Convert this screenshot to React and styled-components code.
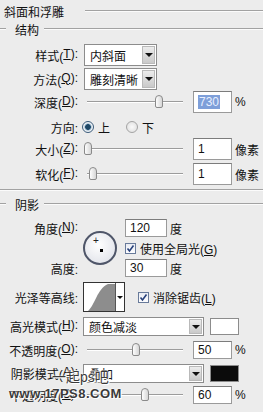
import styled, { createGlobalStyle } from "styled-components";

const Global = createGlobalStyle`
  html, body { margin: 0; padding: 0; background: #ececec; }
  body {
    font-family: "Liberation Sans", "Noto Sans CJK SC", sans-serif;
    font-size: 12px;
    color: #111;
  }
`;

const Panel = styled.div`
  position: relative;
  width: 263px;
  height: 412px;
  overflow: hidden;
  background: #ececec;
  display: flex;
  flex-direction: column;
`;

const Etch = styled.div`
  flex: 1;
  height: 0;
  border-top: 1px solid #a2a2a2;
  border-bottom: 1px solid #fbfbfb;
`;

const TitleRow = styled.div`
  height: 22px;
  display: flex;
  align-items: center;
  padding-left: 4px;
  ${Etch} { margin-left: 21px; }
`;

const GroupHead = styled.div`
  height: 14px;
  margin-top: ${(p) => p.$mt || 0}px;
  display: flex;
  align-items: center;
  span { margin: 0 5px 0 9px; }
`;

const Dash = styled(Etch)`
  flex: 0 0 6px;
`;

const Separator = styled.div`
  margin-top: ${(p) => p.$mt || 0}px;
  height: 0;
  border-top: 1px solid #a2a2a2;
  border-bottom: 1px solid #fbfbfb;
`;

const Row = styled.div`
  display: flex;
  align-items: center;
  height: ${(p) => p.$h || 22}px;
  margin-top: ${(p) => p.$mt || 0}px;
`;

const Label = styled.div`
  flex: 0 0 78px;
  width: 78px;
  display: flex;
  justify-content: flex-end;
  white-space: nowrap;
  margin-right: ${(p) => p.$gap ?? 5}px;
  u { text-decoration: underline; }
`;

const Select = styled.div`
  width: ${(p) => p.$w}px;
  height: ${(p) => p.$h}px;
  box-sizing: border-box;
  border: 1px solid #8c8c8c;
  background: #fff;
  display: flex;
  align-items: stretch;
`;

const SelectText = styled.div`
  flex: 1;
  display: flex;
  align-items: center;
  padding-left: 5px;
  white-space: nowrap;
  overflow: hidden;
`;

const DropButton = styled.div`
  width: 13px;
  margin: 1px;
  background: linear-gradient(#ececec, #c9c9c9);
  border: 1px solid #b9b9b9;
  box-sizing: border-box;
  display: flex;
  align-items: center;
  justify-content: center;
  &::after {
    content: "";
    border-left: 4px solid transparent;
    border-right: 4px solid transparent;
    border-top: 4px solid #111;
  }
`;

const Slider = styled.div`
  width: 105px;
  height: 14px;
  display: flex;
  align-items: center;
  margin-right: 5px;
`;

const Track = styled.div`
  position: relative;
  flex: 1;
  margin: 0 5px 0 4px;
  height: 0;
  border-top: 1px solid #9c9c9c;
  border-bottom: 1px solid #fff;
`;

const Thumb = styled.div`
  position: absolute;
  top: -7px;
  left: ${(p) => p.$pos}%;
  transform: translateX(-50%);
  width: 8px;
  height: 13px;
  box-sizing: border-box;
  border: 1px solid #8a8a8a;
  border-radius: 4px 4px 2px 2px;
  background: linear-gradient(90deg, #fdfdfd, #d6d6d6);
`;

const Input = styled.div`
  width: ${(p) => p.$w || 39}px;
  height: ${(p) => p.$h || 22}px;
  box-sizing: border-box;
  border: 1px solid #9a9a9a;
  border-top-color: #7c7c7c;
  background: #fff;
  display: flex;
  align-items: center;
  padding-left: 4px;
`;

const Selected = styled.span`
  background: #7e9fd9;
  color: #e8efff;
  padding: 0 1px;
`;

const Unit = styled.span`
  margin-left: 3px;
  white-space: nowrap;
`;

const Radio = styled.span`
  width: 12px;
  height: 12px;
  box-sizing: border-box;
  border-radius: 50%;
  border: 1px solid ${(p) => (p.$on ? "#3b5b7a" : "#a4a4a4")};
  background: ${(p) =>
    p.$on
      ? "radial-gradient(circle, #1e4866 0 2.5px, #7fa3bf 3px, #eef2f5 4px)"
      : "radial-gradient(circle, #fafafa, #dcdcdc)"};
  margin-right: 4px;
  margin-left: ${(p) => p.$ml || 0}px;
`;

const Check = styled.span`
  flex: 0 0 11px;
  width: 11px;
  height: 11px;
  box-sizing: border-box;
  border: 1px solid #687a9a;
  background: linear-gradient(#e9ecf3, #fdfdff);
  margin: 0 4px 0 ${(p) => p.$ml || 0}px;
  display: flex;
  align-items: center;
  justify-content: center;
`;

const AngleBlock = styled.div`
  display: grid;
  grid-template-columns: 83px 42px auto;
  grid-template-rows: 18px 22px 18px;
  margin-top: ${(p) => p.$mt || 0}px;
  align-items: center;
`;

const Dial = styled.div`
  grid-column: 2;
  grid-row: 1 / 4;
  position: relative;
  width: 34px;
  height: 34px;
  box-sizing: border-box;
  border-radius: 50%;
  border: 2px solid #4f5669;
  background: radial-gradient(circle at 45% 40%, #ffffff, #e4e6ec 75%, #c8ccd6);
`;

const Cross = styled.span`
  position: absolute;
  left: 8px;
  top: 3px;
  font-size: 10px;
  line-height: 10px;
  color: #222;
`;

const Dot = styled.span`
  position: absolute;
  left: 15px;
  top: 16px;
  width: 3px;
  height: 3px;
  background: #000;
`;

const Cell = styled.div`
  grid-column: ${(p) => p.$col};
  grid-row: ${(p) => p.$row};
  display: flex;
  align-items: center;
`;

const Contour = styled.div`
  width: 42px;
  height: 30px;
  box-sizing: border-box;
  border: 1px solid #333;
  background: #fff;
  display: flex;
`;

const ContourArrow = styled.div`
  flex: 1;
  border-left: 1px solid #555;
  display: flex;
  align-items: center;
  justify-content: center;
  &::after {
    content: "";
    border-left: 3px solid transparent;
    border-right: 3px solid transparent;
    border-top: 3px solid #111;
  }
`;

const Swatch = styled.div`
  width: 29px;
  height: 17px;
  box-sizing: border-box;
  margin-left: 6px;
  border: 1px solid #8c8c8c;
  background: ${(p) => p.$color};
`;

const Watermark = styled.div`
  position: absolute;
  left: ${(p) => p.$x}px;
  top: ${(p) => p.$y}px;
  font-size: ${(p) => p.$size}px;
  font-weight: ${(p) => p.$weight || 400};
  color: #3a3a3a;
  white-space: nowrap;
  text-shadow: 0 0 2px #fff, 0 0 2px #fff, 1px 1px 0 #fff;
  letter-spacing: ${(p) => p.$ls || 0}px;
`;

const CheckMark = () => (
  <svg width="9" height="9" viewBox="0 0 9 9">
    <path d="M1.5 4.5 L3.5 7 L7.5 1.5" fill="none" stroke="#27407a" strokeWidth="1.6" />
  </svg>
);

const SliderRow = ({ label, pos, value, unit, h, mt, selected }) => (
  <Row $h={h} $mt={mt}>
    <Label>{label}</Label>
    <Slider>
      <Track>
        <Thumb $pos={pos} />
      </Track>
    </Slider>
    <Input $h={h}>{selected ? <Selected>{value}</Selected> : value}</Input>
    <Unit>{unit}</Unit>
  </Row>
);

export default function App() {
  return (
    <Panel>
      <Global />
      <TitleRow>
        <span>斜面和浮雕</span>
        <Etch />
      </TitleRow>
      <GroupHead>
        <Dash />
        <span>结构</span>
        <Etch />
      </GroupHead>

      <Row $mt={8}>
        <Label $gap={6}>样式(<u>T</u>):</Label>
        <Select $w={73} $h={22}>
          <SelectText>内斜面</SelectText>
          <DropButton />
        </Select>
      </Row>
      <Row $mt={2}>
        <Label $gap={6}>方法(<u>Q</u>):</Label>
        <Select $w={73} $h={22}>
          <SelectText>雕刻清晰</SelectText>
          <DropButton />
        </Select>
      </Row>
      <SliderRow label={<>深度(<u>D</u>):</>} pos={75} value="730" unit="%" mt={1} selected />
      <Row $h={20} $mt={4}>
        <Label $gap={4}>方向:</Label>
        <Radio $on />
        <span>上</span>
        <Radio $ml={16} />
        <span>下</span>
      </Row>
      <SliderRow label={<>大小(<u>Z</u>):</>} pos={1} value="1" unit="像素" mt={1} />
      <SliderRow label={<>软化(<u>F</u>):</>} pos={6} value="1" unit="像素" mt={3} />

      <Separator $mt={4} />
      <GroupHead $mt={6}>
        <Dash />
        <span>阴影</span>
        <Etch />
      </GroupHead>

      <AngleBlock $mt={8}>
        <Cell $col={1} $row={1}>
          <Label>角度(<u>N</u>):</Label>
        </Cell>
        <Dial>
          <Cross>+</Cross>
          <Dot />
        </Dial>
        <Cell $col={3} $row={1}>
          <Input $w={42} $h={18}>120</Input>
          <Unit>度</Unit>
        </Cell>
        <Cell $col={3} $row={2}>
          <Check>
            <CheckMark />
          </Check>
          <span>使用全局光(<u>G</u>)</span>
        </Cell>
        <Cell $col={1} $row={3}>
          <Label>高度:</Label>
        </Cell>
        <Cell $col={3} $row={3}>
          <Input $w={42} $h={18}>30</Input>
          <Unit>度</Unit>
        </Cell>
      </AngleBlock>

      <Row $h={30} $mt={5}>
        <Label>光泽等高线:</Label>
        <Contour>
          <svg width="31" height="28" viewBox="0 0 31 28">
            <path d="M4 28 C 11 22, 13 6, 24 1 L 31 1 L 31 28 Z" fill="#8d8d8d" />
          </svg>
          <ContourArrow />
        </Contour>
        <Check $ml={13}>
          <CheckMark />
        </Check>
        <span>消除锯齿(<u>L</u>)</span>
      </Row>

      <Row $h={19} $mt={5}>
        <Label>高光模式(<u>H</u>):</Label>
        <Select $w={121} $h={19}>
          <SelectText>颜色减淡</SelectText>
          <DropButton />
        </Select>
        <Swatch $color="#fff" />
      </Row>
      <SliderRow label={<>不透明度(<u>O</u>):</>} pos={51} value="50" unit="%" h={18} mt={5} />
      <Row $h={19} $mt={5}>
        <Label>阴影模式(<u>A</u>):</Label>
        <Select $w={121} $h={19}>
          <SelectText>叠加</SelectText>
          <DropButton />
        </Select>
        <Swatch $color="#0b0b0b" />
      </Row>
      <SliderRow label={<>不透明度(<u>C</u>):</>} pos={60} value="60" unit="%" h={18} mt={3} />

      <Watermark $x={52} $y={366} $size={14}>一起ps吧</Watermark>
      <Watermark $x={9} $y={386} $size={13} $weight={700} $ls={0.5}>
        www.17PS8.COM
      </Watermark>
    </Panel>
  );
}
